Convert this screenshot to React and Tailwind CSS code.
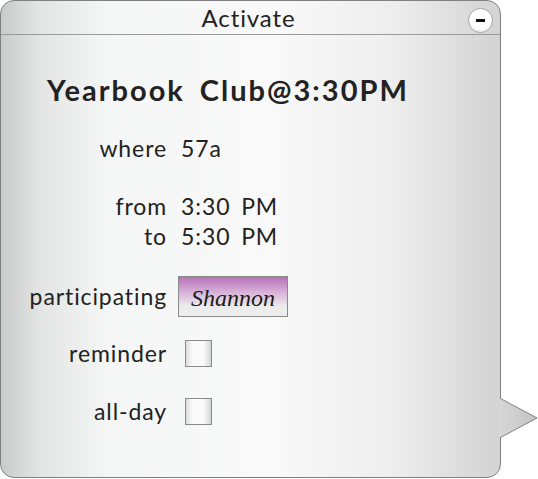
export default function App() {
  const font = { fontFamily: "Lato, 'Open Sans', sans-serif" };
  return (
    <div className="w-[538px] h-[479px] bg-white relative" style={font}>
      <div className="relative w-[501px] h-[478px] rounded-[14px] border border-[#808080] overflow-hidden flex flex-col bg-[linear-gradient(to_right,#c9caca_0%,#e4e5e5_8%,#f5f6f6_22%,#f9f9f9_55%,#eeeeee_78%,#d3d3d3_100%)]">
        <div className="h-[34px] shrink-0 border-b border-[#9a9a9a] flex items-center justify-center relative">
          <span className="text-[24px] text-[#222] leading-none tracking-[0.9px] pt-[1px] pr-[4px]">Activate</span>
          <div className="absolute right-[7px] top-[7px] w-[25px] h-[25px] rounded-full border border-[#a8a8a8] bg-[radial-gradient(circle_at_50%_40%,#ffffff_55%,#e2e2e2_100%)] flex items-center justify-center">
            <div className="w-[9px] h-[3px] bg-[#111]" />
          </div>
        </div>
        <div className="flex flex-col text-[#222]">
          <div className="pl-[46px] pt-[40px] text-[29px] font-bold leading-none tracking-[2px] [word-spacing:6px]">
            Yearbook Club@3:30PM
          </div>
          <div className="grid grid-cols-[166px_1fr] gap-x-[14px] text-[23px] leading-none tracking-[0.9px] mt-[29px] [word-spacing:4px]">
            <div className="text-right h-[30px] flex items-center justify-end">where</div>
            <div className="h-[30px] flex items-center">57a</div>

            <div className="text-right h-[30px] flex items-center justify-end mt-[28px]">from</div>
            <div className="h-[30px] flex items-center mt-[28px]">3:30 PM</div>
            <div className="text-right h-[30px] flex items-center justify-end">to</div>
            <div className="h-[30px] flex items-center">5:30 PM</div>

            <div className="text-right h-[41px] flex items-center justify-end mt-[25px]">participating</div>
            <div className="h-[41px] flex items-center mt-[25px] -ml-[3px]">
              <div className="w-[110px] h-[41px] border border-[#8a8a8a] bg-[linear-gradient(to_bottom,#b673b6_0%,#d9b3d9_40%,#ececec_75%,#ededed_100%)] flex items-center justify-center pt-[2px]">
                <span className="italic text-[24px] tracking-normal text-[#1a1a1a]" style={{ fontFamily: "'Liberation Serif', serif" }}>Shannon</span>
              </div>
            </div>

            <div className="text-right h-[26px] flex items-center justify-end mt-[23px]">reminder</div>
            <div className="h-[26px] flex items-center mt-[23px] pl-[4px]">
              <div className="w-[27px] h-[27px] border border-[#8a8a8a] bg-[linear-gradient(to_right,#dcdcdc_0%,#fafafa_25%,#fafafa_70%,#d4d4d4_100%)]" />
            </div>

            <div className="text-right h-[26px] flex items-center justify-end mt-[32px]">all-day</div>
            <div className="h-[26px] flex items-center mt-[32px] pl-[4px]">
              <div className="w-[27px] h-[27px] border border-[#8a8a8a] bg-[linear-gradient(to_right,#dcdcdc_0%,#fafafa_25%,#fafafa_70%,#d4d4d4_100%)]" />
            </div>
          </div>
        </div>
      </div>
      <svg className="absolute left-[499px] top-[398px]" width="39" height="40" viewBox="0 0 39 40">
        <defs>
          <linearGradient id="tri" x1="0" y1="0" x2="1" y2="0">
            <stop offset="0" stopColor="#d6d6d6" />
            <stop offset="1" stopColor="#c4c4c4" />
          </linearGradient>
        </defs>
        <polygon points="0,0 38,20 0,40" fill="url(#tri)" />
        <polyline points="1.5,0.5 38,20 1.5,39.5" fill="none" stroke="#808080" strokeWidth="1" />
      </svg>
    </div>
  );
}
